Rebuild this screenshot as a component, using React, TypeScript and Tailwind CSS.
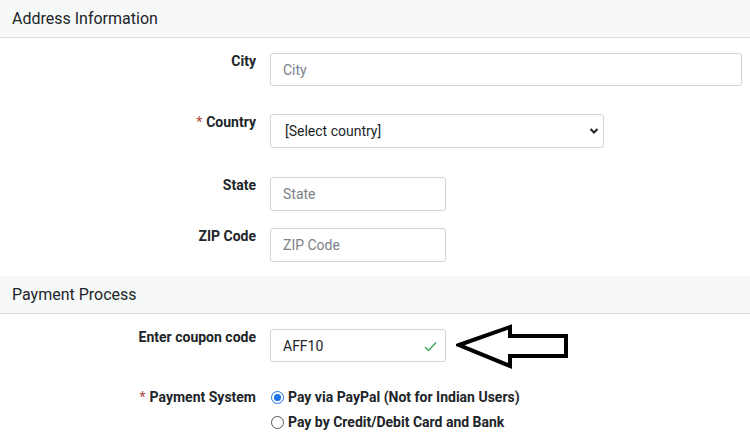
import React from "react";

const font = { fontFamily: "Roboto, 'Liberation Sans', Arial, sans-serif" };

function Header({ title }: { title: string }) {
  return (
    <div className="h-[38px] bg-[#f7f9f9] border-b border-[#d9dcde] flex items-center px-3 text-[16px] text-[#212529]">
      {title}
    </div>
  );
}

function Label({ text, req }: { text: string; req?: boolean }) {
  return (
    <div className="w-[256px] shrink-0 text-right pt-0 leading-[16px] text-[14px] font-bold text-[#212529]">
      {req && <span className="text-[#b0473f] font-normal mr-[4px]">*</span>}
      {text}
    </div>
  );
}

export default function App() {
  return (
    <div className="w-[750px] h-[434px] bg-white overflow-hidden" style={font}>
      <Header title="Address Information" />
      <div className="flex items-start gap-[14px] mt-[15px]">
        <Label text="City" />
        <input
          className="w-[472px] h-[33px] border border-[#ced4da] rounded-[3px] px-3 text-[14px] text-[#495057] placeholder:text-[#7b8188] outline-none"
          placeholder="City"
        />
      </div>
      <div className="flex items-start gap-[14px] mt-[28px]">
        <Label text="Country" req />
        <div className="relative w-[334px] h-[34px]">
          <select className="appearance-none w-full h-full border border-[#ced4da] rounded-[3px] pl-[14px] text-[14px] text-[#212529] bg-white outline-none">
            <option>[Select country]</option>
          </select>
          <svg
            className="absolute right-[5px] top-[13px] pointer-events-none"
            width="10"
            height="8"
            viewBox="0 0 10 8"
          >
            <polyline points="1.5,2 5,5.5 8.5,2" fill="none" stroke="#222" strokeWidth="2" />
          </svg>
        </div>
      </div>
      <div className="flex items-start gap-[14px] mt-[29px]">
        <Label text="State" />
        <input
          className="w-[176px] h-[34px] border border-[#ced4da] rounded-[3px] px-3 text-[14px] placeholder:text-[#7b8188] outline-none"
          placeholder="State"
        />
      </div>
      <div className="flex items-start gap-[14px] mt-[17px]">
        <Label text="ZIP Code" />
        <input
          className="w-[176px] h-[34px] border border-[#ced4da] rounded-[3px] px-3 text-[14px] placeholder:text-[#7b8188] outline-none"
          placeholder="ZIP Code"
        />
      </div>
      <div className="mt-[14px]">
        <Header title="Payment Process" />
      </div>
      <div className="flex items-start gap-[14px] mt-[15px]">
        <Label text="Enter coupon code" />
        <div className="relative w-[176px] h-[33px]">
          <input
            className="w-full h-full border border-[#ced4da] rounded-[3px] px-3 text-[14px] text-[#212529] outline-none"
            defaultValue="AFF10"
          />
          <svg
            className="absolute right-[9px] top-[12px]"
            width="13"
            height="11"
            viewBox="0 0 13 11"
          >
            <polyline points="1,6 4.5,9.5 12,1.5" fill="none" stroke="#3ca55c" strokeWidth="1.4" />
          </svg>
        </div>
        <svg className="-mt-[5px] -ml-[4px]" width="116" height="46" viewBox="0 0 116 46">
          <polygon
            points="3,21 54,3 54,12 110,12 110,32 54,32 54,42"
            fill="none"
            stroke="#000"
            strokeWidth="4"
            strokeLinejoin="miter"
          />
        </svg>
      </div>
      <div className="flex items-start gap-[14px] mt-[19px]">
        <Label text="Payment System" req />
        <div className="-mt-[4px] text-[14px] font-bold text-[#212529]">
          <label className="flex items-center h-[25px]">
            <span className="w-[13px] h-[13px] rounded-full border-[1.5px] border-[#1a73e8] flex items-center justify-center mr-[4px] ml-[1px]">
              <span className="w-[7px] h-[7px] rounded-full bg-[#1a73e8]" />
            </span>
            Pay via PayPal (Not for Indian Users)
          </label>
          <label className="flex items-center h-[25px]">
            <span className="w-[13px] h-[13px] rounded-full border border-[#555] mr-[4px] ml-[1px]" />
            Pay by Credit/Debit Card and Bank
          </label>
        </div>
      </div>
    </div>
  );
}
